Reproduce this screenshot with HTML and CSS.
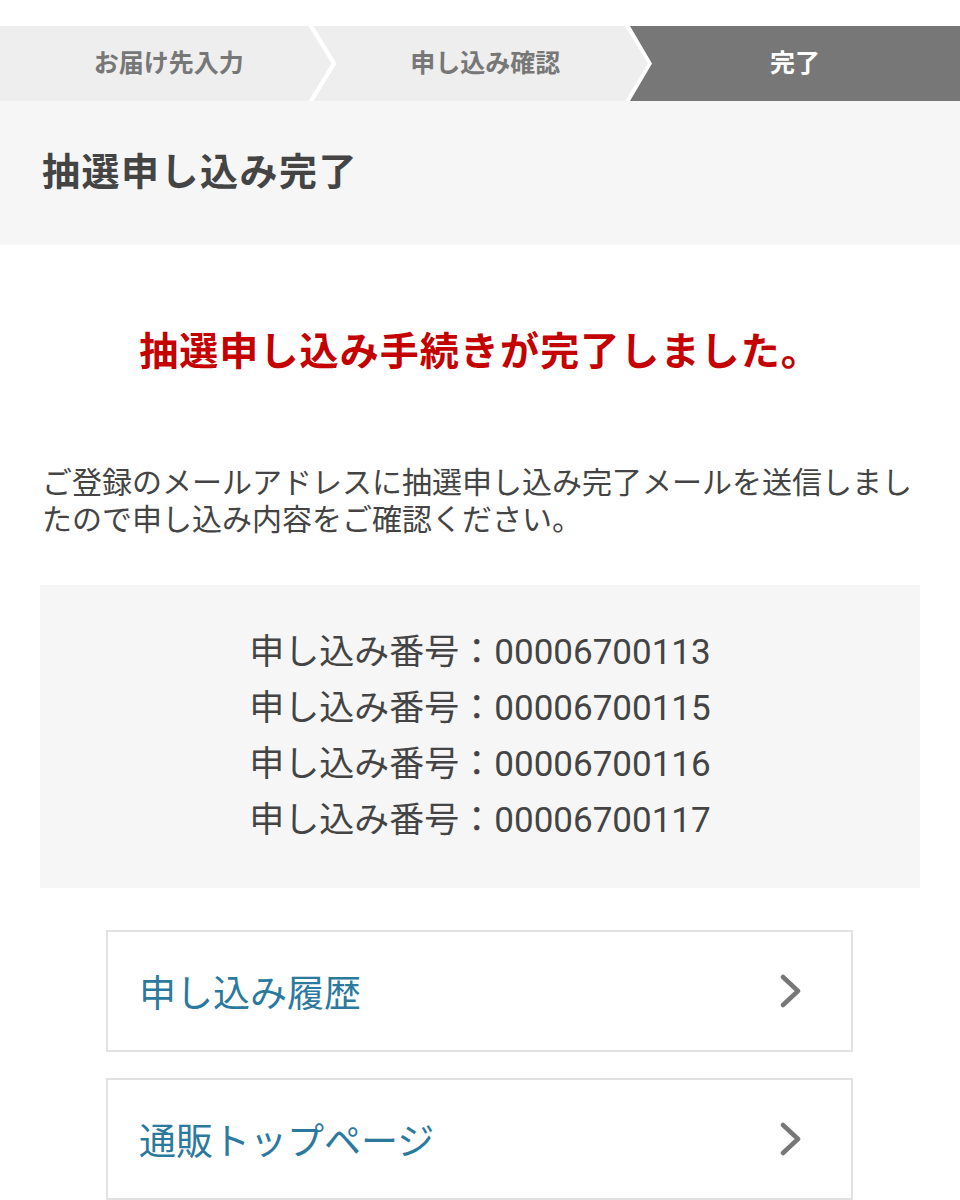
FILE: index.html
```html
<!DOCTYPE html>
<html lang="ja">
<head>
    <meta charset="UTF-8">
    <meta name="viewport" content="width=device-width, initial-scale=1.0">
    <title>抽選申し込み完了</title>
    <link rel="stylesheet" href="styles.css">
</head>
<body>
<ol class="steps">
    <li class="step">お届け先入力</li>
    <li class="step">申し込み確認</li>
    <li class="step current">完了</li>
</ol>

<header class="page-head">
    <h1>抽選申し込み完了</h1>
</header>

<main class="content">
    <h2 class="done-msg">抽選申し込み手続きが完了しました。</h2>
    <p class="note">ご登録のメールアドレスに抽選申し込み完了メールを送信しましたので申し込み内容をご確認ください。</p>

    <div class="numbers">
        <p>申し込み番号：00006700113</p>
        <p>申し込み番号：00006700115</p>
        <p>申し込み番号：00006700116</p>
        <p>申し込み番号：00006700117</p>
    </div>

    <ul class="links">
        <li>
            <a href="#" class="link-btn">
                <span>申し込み履歴</span>
                <svg class="arrow" width="24" height="34" viewBox="0 0 24 34"><path d="M4 3 L19 17 L4 31" fill="none" stroke="#777" stroke-width="4.5" stroke-linecap="round" stroke-linejoin="round"/></svg>
            </a>
        </li>
        <li>
            <a href="#" class="link-btn">
                <span>通販トップページ</span>
                <svg class="arrow" width="24" height="34" viewBox="0 0 24 34"><path d="M4 3 L19 17 L4 31" fill="none" stroke="#777" stroke-width="4.5" stroke-linecap="round" stroke-linejoin="round"/></svg>
            </a>
        </li>
    </ul>
</main>
</body>
</html>
```

FILE: styles.css
```css
* { margin: 0; padding: 0; box-sizing: border-box; }
body {
    font-family: Roboto, "Noto Sans CJK JP", sans-serif;
    color: #444;
    background: #fff;
    padding-top: 26px;
}

/* stepper */
.steps { list-style: none; display: flex; height: 75px; background: #fff; }
.step {
    flex: 1;
    display: flex;
    align-items: center;
    justify-content: center;
    background: #eee;
    color: #777;
    font-size: 25px;
    font-weight: bold;
    clip-path: polygon(0 0, calc(100% - 23px) 0, 100% 50%, calc(100% - 23px) 100%, 0 100%, 23px 50%);
    margin-left: -18px;
    padding: 0 0 6px 9px;
}
.step:first-child {
    margin-left: 0;
    padding-left: 6px;
    clip-path: polygon(0 0, calc(100% - 23px) 0, 100% 50%, calc(100% - 23px) 100%, 0 100%);
}
.step.current {
    background: #777;
    color: #fff;
    flex: 0 0 330px;
    padding-left: 0;
    clip-path: polygon(0 0, 100% 0, 100% 100%, 0 100%, 22px 50%);
}

.page-head {
    background: #f6f6f6;
    height: 144px;
    display: flex;
    align-items: center;
    padding: 0 42px 10px;
}
.page-head h1 { font-size: 38px; font-weight: bold; color: #444; letter-spacing: 1.5px; }

.content { padding: 82px 40px 40px; }
.done-msg {
    text-align: center;
    color: #c40000;
    font-size: 39px;
    line-height: 50px;
    font-weight: bold;
    letter-spacing: 1.1px;
}
.note {
    margin-top: 87px;
    padding: 0 2px;
    font-size: 30px;
    line-height: 37px;
    color: #444;
}

.numbers {
    margin-top: 47px;
    background: #f6f6f6;
    padding: 40px 0 39px;
    text-align: center;
    font-size: 35px;
    line-height: 56px;
    color: #444;
}

.links { list-style: none; margin: 42px 67px 0 66px; }
.links li + li { margin-top: 26px; }
.link-btn {
    display: flex;
    align-items: center;
    justify-content: space-between;
    height: 122px;
    padding: 0 48px 0 31px;
    border: 2px solid #e2e2e2;
    text-decoration: none;
    color: #2b7a9e;
    font-size: 37px;
}
.arrow { flex-shrink: 0; }
```
